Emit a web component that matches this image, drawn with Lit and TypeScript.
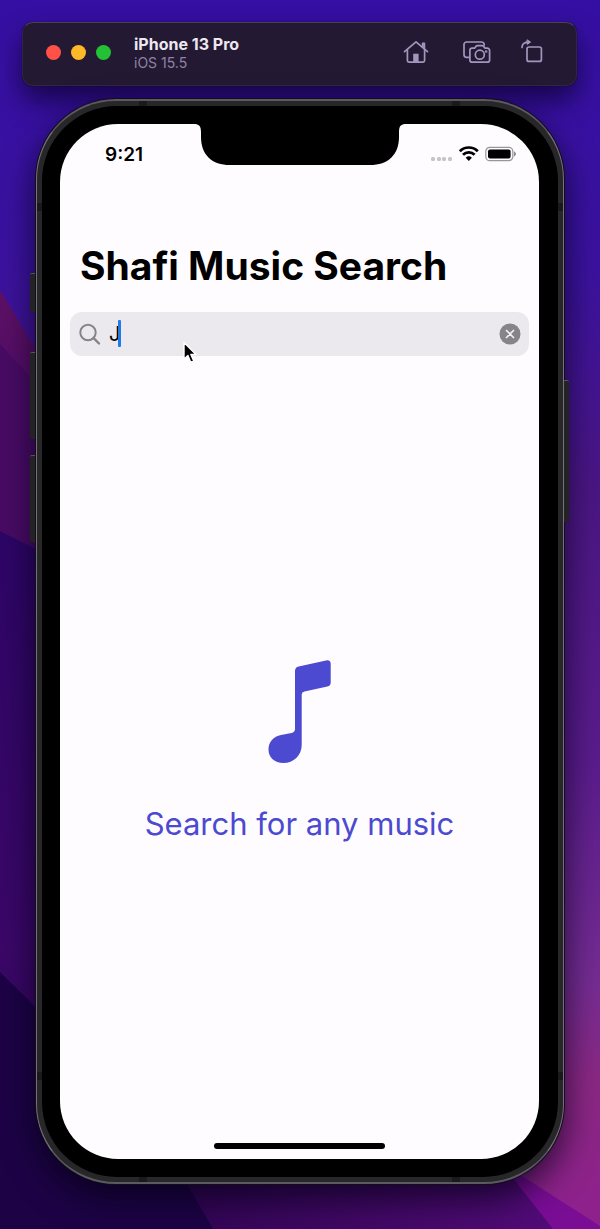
import { LitElement, html, css, svg } from "lit";
import { customElement, state } from "lit/decorators.js";

@customElement("desktop-wallpaper")
class DesktopWallpaper extends LitElement {
  static styles = css`
    :host { display: block; }
    .art { display: block; width: 100%; height: 100%; }
  `;

  render() {
    return html`
      <svg class="art" viewBox="0 0 600 1229" preserveAspectRatio="none" aria-hidden="true">
        <defs>
          <linearGradient id="sky" x1="0" y1="0" x2="0" y2="1">
            <stop offset="0" stop-color="#350fa3"></stop>
            <stop offset=".22" stop-color="#3b129f"></stop>
            <stop offset=".4" stop-color="#4a1682"></stop>
            <stop offset=".62" stop-color="#5a1c8c"></stop>
            <stop offset=".8" stop-color="#752c92"></stop>
            <stop offset=".88" stop-color="#8a2883"></stop>
            <stop offset="1" stop-color="#8f208e"></stop>
          </linearGradient>
          <linearGradient id="plum" x1="0" y1="0" x2="0" y2="1">
            <stop offset="0" stop-color="#5e1164"></stop>
            <stop offset=".35" stop-color="#4c0b6a"></stop>
            <stop offset="1" stop-color="#520c70"></stop>
          </linearGradient>
          <linearGradient id="indigo" x1="0" y1="0" x2="0" y2="1">
            <stop offset="0" stop-color="#2d0566"></stop>
            <stop offset=".6" stop-color="#3b0768"></stop>
            <stop offset="1" stop-color="#2f0558"></stop>
          </linearGradient>
          <linearGradient id="floor" x1="0" y1="0" x2="1" y2="0">
            <stop offset="0" stop-color="#2e0450"></stop>
            <stop offset="1" stop-color="#520b78"></stop>
          </linearGradient>
        </defs>
        <rect width="600" height="1229" fill="url(#sky)"></rect>
        <path d="M0 290 L200 620 V700 H0Z" fill="url(#plum)"></path>
        <path d="M0 344 L200 560 V700 H0Z" fill="#480b64"></path>
        <path d="M0 531 L300 680 V1229 H0Z" fill="url(#indigo)"></path>
        <path d="M120 1100 L470 1100 L553 1229 H120Z" fill="url(#floor)"></path>
        <path d="M0 972 L150 1120 L213 1229 H0Z" fill="#1d0346"></path>
        <path d="M500 1162 L600 1226 V1229 H553Z" fill="#790d94"></path>
      </svg>
    `;
  }
}

@customElement("simulator-bar")
class SimulatorBar extends LitElement {
  static styles = css`
    :host {
      box-sizing: border-box;
      display: flex;
      align-items: center;
      height: 64px;
      padding: 0 28px 3px 23px;
      border: 1px solid #30263e;
      border-top-color: #4a4156;
      border-radius: 11px;
      background: #241932;
      box-shadow: 0 0 1px #000, 0 14px 26px rgba(8, 0, 30, .65);
      font-family: Inter, "Liberation Sans", sans-serif;
    }
    .lights { display: flex; gap: 10px; }
    .light {
      width: 15px;
      height: 15px;
      padding: 0;
      border: 0;
      border-radius: 50%;
    }
    .close { background: #ff5148; }
    .minimize { background: #fdb827; }
    .zoom { background: #23c236; }
    .device { flex: 1; margin-left: 23px; }
    .name {
      margin: 0;
      color: #ece8f0;
      font-size: 16px;
      font-weight: 700;
      line-height: 19px;
    }
    .system {
      margin: 0;
      color: #8f83a6;
      font-size: 14px;
      line-height: 17px;
    }
    .tools { display: flex; gap: 31px; }
    .tool {
      width: 28px;
      height: 28px;
      padding: 0;
      border: 0;
      background: none;
      color: #a396bd;
    }
    .glyph {
      display: block;
      overflow: visible;
      fill: none;
      stroke: currentColor;
      stroke-width: 1.7;
      stroke-linecap: round;
      stroke-linejoin: round;
    }
  `;

  private tool(label: string, shape: unknown) {
    return html`
      <button class="tool" aria-label=${label}>
        <svg class="glyph" width="28" height="28" viewBox="0 0 28 28" aria-hidden="true">${shape}</svg>
      </button>
    `;
  }

  render() {
    return html`
      <div class="lights">
        <button class="light close" aria-label="Close"></button>
        <button class="light minimize" aria-label="Minimize"></button>
        <button class="light zoom" aria-label="Zoom"></button>
      </div>
      <div class="device">
        <p class="name">iPhone 13 Pro</p>
        <p class="system">iOS 15.5</p>
      </div>
      <div class="tools">
        ${this.tool("Home", svg`
          <path d="M2.500 12.700 14 2.800 25.500 12.700"></path>
          <path d="M5.400 11V21.500a1.600 1.600 0 0 0 1.600 1.600h14a1.600 1.600 0 0 0 1.600-1.600V11"></path>
          <path d="M20.600 8.100V4.300h1.800v5.400"></path>
          <path d="M11.200 22.900v-8.200h5.400v8.200Z" fill="currentColor" stroke="none"></path>
        `)}
        ${this.tool("Screenshot", svg`
          <path d="M8 18.400H5.600A2.600 2.600 0 0 1 3 15.800V5.600A2.600 2.600 0 0 1 5.600 3h15A2.600 2.600 0 0 1 23.200 5.600V6"></path>
          <path d="M11.200 9.200h2.300l1.700-2.100q.4-.5 1.100-.5h5q.7 0 1.100.5l1.700 2.100h2.200a2.300 2.300 0 0 1 2.300 2.300v9.400a2.300 2.300 0 0 1-2.300 2.300H11.200a2.300 2.300 0 0 1-2.300-2.300v-9.400a2.300 2.300 0 0 1 2.300-2.300Z"></path>
          <circle cx="18.800" cy="15.700" r="4.500"></circle>
          <circle cx="25.100" cy="12.500" r=".5"></circle>
        `)}
        ${this.tool("Rotate", svg`
          <rect x="7" y="8" width="14.400" height="14.400" rx="2"></rect>
          <path d="M2 8.400C2 4.600 4.400 3.100 9 3.100"></path>
          <path d="M7.400 1 10.600 3.100 7.400 5.200Z" fill="currentColor" stroke-width="1"></path>
        `)}
      </div>
    `;
  }
}

@customElement("music-search")
class MusicSearch extends LitElement {
  static styles = css`
    :host {
      display: flex;
      flex-direction: column;
      background: #fefcff;
      font-family: Inter, "Liberation Sans", sans-serif;
    }
    .status {
      position: relative;
      display: flex;
      align-items: center;
      justify-content: space-between;
      height: 60px;
      padding: 0 22px 0 45px;
    }
    .time { font-size: 19px; font-weight: 600; }
    .notch {
      position: absolute;
      top: 0;
      left: 50%;
      transform: translateX(-50%);
    }
    .signals { display: block; }
    .title {
      margin: 57px 20px 22px;
      font-size: 39px;
      font-weight: 700;
      line-height: 49px;
    }
    .field {
      position: relative;
      display: flex;
      align-items: center;
      gap: 8px;
      height: 44px;
      margin: 0 10px;
      padding: 0 8px;
      border-radius: 12px;
      background: #ebe9ed;
    }
    .lens, .cross { display: block; flex: none; }
    .query {
      flex: 1;
      min-width: 0;
      padding: 0;
      border: 0;
      outline: 0;
      background: none;
      color: #000;
      font: 400 20px/28px Inter, "Liberation Sans", sans-serif;
      caret-color: transparent;
    }
    .caret {
      position: absolute;
      top: 8px;
      left: 48px;
      width: 3px;
      height: 27px;
      border-radius: 1px;
      background: #1f7be8;
    }
    .clear {
      width: 22px;
      height: 22px;
      padding: 0;
      border: 0;
      background: none;
    }
    .pointer { position: absolute; top: 28px; left: 111px; }
    .empty {
      flex: 1;
      display: flex;
      flex-direction: column;
      align-items: center;
      justify-content: center;
      gap: 38px;
      padding-top: 6px;
      color: #4c4ad0;
    }
    .note { display: block; }
    .hint { margin: 0; font-size: 31px; line-height: 44px; }
    .home {
      width: 171px;
      height: 6px;
      margin: 0 auto 10px;
      border-radius: 3px;
      background: #000;
    }
  `;

  @state() private query = "J";

  private onInput(event: Event) {
    this.query = (event.target as HTMLInputElement).value;
  }

  render() {
    return html`
      <div class="status">
        <span class="time">9:21</span>
        <svg class="notch" width="212" height="42" viewBox="0 0 212 42" aria-hidden="true">
          <path d="M0 0C5 0 7 2 7 8v5C7 31 18 41 36 41H176C194 41 205 31 205 13V8C205 2 207 0 212 0Z"></path>
        </svg>
        <svg class="signals" width="87" height="18" viewBox="0 0 87 18" aria-hidden="true">
          <g fill="#c6c5c8">
            <rect x="1" y="12" width="4" height="4" rx="1.500"></rect>
            <rect x="7" y="12" width="4" height="4" rx="1.500"></rect>
            <rect x="12" y="12" width="4" height="4" rx="1.500"></rect>
            <rect x="18" y="12" width="4" height="4" rx="1.500"></rect>
          </g>
          <g fill="none" stroke="#000" stroke-width="2.700">
            <path d="M29.800 6.300a12.600 12.600 0 0 1 18 0"></path>
            <path d="M33 9.800a8 8 0 0 1 11.600 0"></path>
          </g>
          <path d="M35.700 12.800a4.500 4.500 0 0 1 6.200 0l-3.100 3.200Z"></path>
          <rect x="55.800" y="2.300" width="27" height="13.400" rx="4" fill="none" stroke="#98969a" stroke-width="1.200"></rect>
          <rect x="58" y="4.500" width="22.600" height="9" rx="2"></rect>
          <path d="M84.400 6.800q2.200 2.200 0 4.400Z" fill="#8b8a8d" stroke="#8b8a8d"></path>
        </svg>
      </div>
      <h1 class="title">Shafi Music Search</h1>
      <div class="field">
        <svg class="lens" width="23" height="23" viewBox="0 0 23 23" fill="none" stroke="#858488" stroke-width="2" stroke-linecap="round" aria-hidden="true">
          <circle cx="10" cy="9.500" r="7.700"></circle>
          <path d="M15.600 15.100 21 20.500" stroke-width="2.400"></path>
        </svg>
        <input class="query" type="text" aria-label="Search music" .value=${this.query} @input=${this.onInput}>
        <button class="clear" aria-label="Clear text" @click=${() => { this.query = ""; }}>
          <svg class="cross" width="22" height="22" viewBox="0 0 22 22" aria-hidden="true">
            <circle cx="11" cy="11" r="10.500" fill="#858488"></circle>
            <path d="M7.500 7.500l7 7M14.500 7.500l-7 7" stroke="#f1eff3" stroke-width="1.700" stroke-linecap="round"></path>
          </svg>
        </button>
        <span class="caret"></span>
        <svg class="pointer" width="18" height="26" viewBox="0 0 18 26" aria-hidden="true">
          <path d="M3 2.500V19.300L6.900 15.600 9.700 22.200 12.700 20.900 9.900 14.400H15Z" stroke="#fff" stroke-width="1.400" stroke-linejoin="round"></path>
        </svg>
      </div>
      <div class="empty">
        <svg class="note" width="64" height="104" viewBox="0 0 64 104" fill="currentColor" aria-hidden="true">
          <path d="M27 69V11Q27 7.200 30.700 6.400L58 .4Q62.700-.4 62.700 4V22.500Q62.700 25.800 59.400 26.500L36.500 31.500Q33.700 32.100 33.700 34.500V85C33.700 95.500 25.500 103 15.500 103 6.500 103 .5 97.500 .5 89.500.5 82 5.500 76.500 13 75L23.500 72.900Q27 72.200 27 69Z"></path>
        </svg>
        <p class="hint">Search for any music</p>
      </div>
      <div class="home"></div>
    `;
  }
}

@customElement("app-root")
class AppRoot extends LitElement {
  static styles = css`
    :host {
      position: relative;
      box-sizing: border-box;
      display: flex;
      flex-direction: column;
      gap: 13px;
      min-height: 100vh;
      padding: 22px 23px 45px 22px;
      overflow: hidden;
    }
    .wallpaper { position: absolute; inset: 0; z-index: -1; }
    .phone {
      position: relative;
      flex: 1;
      display: flex;
      margin: 0 13px 0 14px;
      padding: 5px;
      border: 1px solid #747277;
      border-width: 2px 1px;
      border-color: #5c5a60 #747277;
      border-radius: 80px;
      background: #272628;
      box-shadow: 0 0 0 1px #120c1c, 0 14px 34px rgba(4, 0, 20, .75);
    }
    .bezel {
      flex: 1;
      display: flex;
      padding: 18px 19px 18px 18px;
      border-radius: 75px;
      background: #000;
    }
    .screen { flex: 1; border-radius: 58px; overflow: hidden; }
    .key {
      position: absolute;
      left: -7px;
      width: 5px;
      box-sizing: border-box;
      border-top: 1px solid #555;
      border-radius: 2px 0 0 2px;
      background: #232324;
    }
    .mute { top: 172px; height: 39px; }
    .louder { top: 251px; height: 87px; }
    .quieter { top: 354px; height: 87px; }
    .power {
      top: 279px;
      left: auto;
      right: -6px;
      height: 142px;
      border-radius: 0 2px 2px 0;
    }
    .band { position: absolute; background: #1a191b; }
    .across { width: 8px; height: 5px; }
    .along { width: 5px; height: 8px; }
    .top { top: 0; }
    .bottom { bottom: 0; }
    .left { left: 0; }
    .right { right: 0; }
    .near-left { left: 102px; }
    .near-right { right: 103px; }
    .near-top { top: 102px; }
    .near-bottom { bottom: 102px; }
  `;

  render() {
    return html`
      <desktop-wallpaper class="wallpaper"></desktop-wallpaper>
      <simulator-bar></simulator-bar>
      <div class="phone">
        <div class="bezel"><music-search class="screen"></music-search></div>
        <span class="key mute"></span>
        <span class="key louder"></span>
        <span class="key quieter"></span>
        <span class="key power"></span>
        <span class="band across top near-left"></span>
        <span class="band across top near-right"></span>
        <span class="band across bottom near-left"></span>
        <span class="band across bottom near-right"></span>
        <span class="band along left near-top"></span>
        <span class="band along right near-top"></span>
        <span class="band along left near-bottom"></span>
        <span class="band along right near-bottom"></span>
      </div>
    `;
  }
}
